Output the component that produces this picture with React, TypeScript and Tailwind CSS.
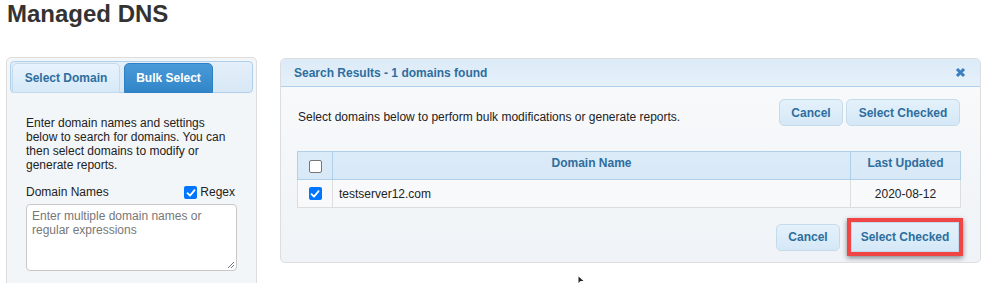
import React from "react";

const font = { fontFamily: '"Liberation Sans", Arial, sans-serif' };

function Check({ checked }: { checked: boolean }) {
  if (checked) {
    return (
      <span className="inline-flex h-[13px] w-[13px] items-center justify-center rounded-[2px] bg-[#0075ff]">
        <svg width="10" height="10" viewBox="0 0 10 10">
          <path d="M1.5 5.2 L4 7.6 L8.6 2.2" stroke="white" strokeWidth="1.8" fill="none" strokeLinecap="round" strokeLinejoin="round" />
        </svg>
      </span>
    );
  }
  return <span className="inline-block h-[13px] w-[13px] rounded-[2px] border border-[#767676] bg-white" />;
}

function Btn({ children, w }: { children: React.ReactNode; w: string }) {
  return (
    <button
      className={`${w} h-[27px] rounded-[5px] border border-[#c5dbec] bg-gradient-to-b from-[#e4f1fb] to-[#d5e8f7] text-[12px] font-bold text-[#2e6e9e]`}
    >
      {children}
    </button>
  );
}

export default function App() {
  return (
    <div className="relative h-[283px] w-[993px] overflow-hidden bg-white" style={font}>
      <h1 className="pl-[7px] text-[24px] font-bold leading-[28px] text-[#333]">Managed DNS</h1>
      <div className="mt-[29px] flex items-start">
        {/* Left panel */}
        <div className="ml-[6px] h-[240px] w-[251px] rounded-[5px] border border-[#dddddd] bg-[#f3f6f9] p-[3px]">
          <div className="flex h-[32px] items-end rounded-[4px] border border-[#aed0ea] bg-gradient-to-b from-[#e4eff9] to-[#d8e8f6] pl-[1px] pt-[1px]">
            <div className="-mb-px flex h-[30px] w-[108px] items-center justify-center rounded-t-[5px] border border-[#c5dbec] bg-gradient-to-b from-[#e8f3fc] to-[#d6e9f8] text-[12px] font-bold text-[#2e6e9e]">
              Select Domain
            </div>
            <div className="-mb-px ml-[4px] flex h-[30px] w-[89px] items-center justify-center rounded-t-[5px] border border-[#2c7fc4] bg-gradient-to-b from-[#4a9ad8] to-[#3186c8] text-[12px] font-bold text-white">
              Bulk Select
            </div>
          </div>
          <div className="px-[16px] pt-[23px]">
            <p className="text-[12px] leading-[14px] text-[#222]">
              Enter domain names and settings below to search for domains. You can then select domains to modify or generate reports.
            </p>
            <div className="mt-[13px] flex items-center justify-between pr-[2px] text-[12px] leading-[15px] text-[#222]">
              <span>Domain Names</span>
              <span className="flex items-center gap-[3px]">
                <Check checked />
                Regex
              </span>
            </div>
            <div className="relative mt-[4px] h-[67px] w-[211px] rounded-[4px] border border-[#c8c8c8] bg-white px-[5px] pt-[4px] text-[12px] leading-[14px] text-[#777]">
              Enter multiple domain names or regular expressions
              <svg className="absolute bottom-[1px] right-[1px]" width="8" height="8" viewBox="0 0 8 8">
                <path d="M7 1 L1 7 M7 4 L4 7" stroke="#777" strokeWidth="1" />
              </svg>
            </div>
          </div>
        </div>

        {/* Right panel */}
        <div className="ml-[23px] mt-[1px] w-[701px] overflow-hidden rounded-[5px] border border-[#dddddd] bg-gradient-to-b from-[#f9fafb] to-[#eff3f7]">
          <div className="flex h-[28px] items-center justify-between border-b border-[#aed0ea] bg-gradient-to-b from-[#dcebf8] to-[#e5f0f9] pl-[13px] pr-[14px]">
            <span className="text-[12px] font-bold text-[#2e6e9e]">Search Results - 1 domains found</span>
            <svg width="11" height="11" viewBox="0 0 10 10">
              <path d="M1.8 1.8 L8.2 8.2 M8.2 1.8 L1.8 8.2" stroke="#3a7fc0" strokeWidth="2.8" />
            </svg>
          </div>
          <div className="pl-[16px] pr-[20px]">
            <div className="mt-[12px] flex h-[27px] items-center justify-between">
              <span className="pl-[1px] pt-[8px] text-[12px] text-[#222]">
                Select domains below to perform bulk modifications or generate reports.
              </span>
              <div className="flex gap-[3px]">
                <Btn w="w-[64px]">Cancel</Btn>
                <Btn w="w-[114px]">Select Checked</Btn>
              </div>
            </div>
            <table className="mt-[25px] w-[664px] border-collapse text-[12px]">
              <thead>
                <tr className="h-[28px] bg-gradient-to-b from-[#dcebf8] to-[#d8e8f6]">
                  <th className="w-[35px] border border-[#aed0ea] pt-[2px]">
                    <span className="flex justify-center">
                      <Check checked={false} />
                    </span>
                  </th>
                  <th className="border border-[#aed0ea] pb-[5px] font-bold text-[#2e6e9e]">Domain Name</th>
                  <th className="w-[110px] border border-[#aed0ea] pb-[5px] font-bold text-[#2e6e9e]">Last Updated</th>
                </tr>
              </thead>
              <tbody>
                <tr className="h-[28px] bg-[#f8f9fb]">
                  <td className="border border-[#dddddd]">
                    <span className="flex justify-center">
                      <Check checked />
                    </span>
                  </td>
                  <td className="border border-[#dddddd] pl-[6px] text-[#222]">testserver12.com</td>
                  <td className="border border-[#dddddd] text-center text-[#222]">2020-08-12</td>
                </tr>
              </tbody>
            </table>
            <div className="-mr-[3px] mt-[10px] mb-[6px] flex items-center justify-end gap-[7px]">
              <Btn w="w-[64px]">Cancel</Btn>
              <div className="border-[4px] border-[#f04545] shadow-[0_2px_5px_rgba(0,0,0,0.45)]">
                <button className="h-[30px] w-[108px] border border-[#c5dbec] bg-gradient-to-b from-[#e4f1fb] to-[#d5e8f7] text-[12px] font-bold text-[#2e6e9e]">
                  Select Checked
                </button>
              </div>
            </div>
          </div>
        </div>
      </div>
      <svg className="absolute left-[578px] top-[276px]" width="8" height="8" viewBox="0 0 8 8">
        <path d="M0.5 0.5 L0.5 7 L2.5 5 L5.5 5 Z" fill="#222" />
      </svg>
    </div>
  );
}
